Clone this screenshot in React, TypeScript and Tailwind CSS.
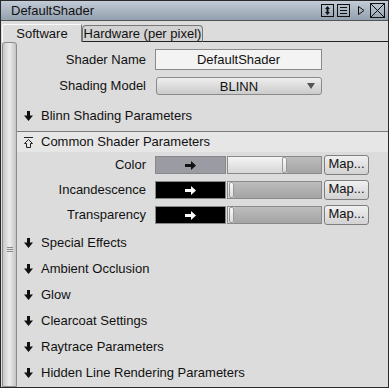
import { ReactNode } from 'react'

const font = { fontFamily: '"Liberation Sans", Arial, sans-serif' }

function DownArrow() {
  return (
    <svg width="9" height="10" viewBox="0 0 9 10" className="shrink-0">
      <path d="M3 0h3v4.5h3L4.5 10 0 4.5h3z" fill="#111" />
    </svg>
  )
}

function CollapseIcon() {
  return (
    <svg width="9" height="11" viewBox="0 0 9 11" className="shrink-0">
      <path d="M0 0.5h9" stroke="#222" />
      <path d="M4.5 2.5L8.5 6.5H6.5v4H2.5v-4H0.5z" fill="none" stroke="#222" />
    </svg>
  )
}

function RightArrow({ color }: { color: string }) {
  return (
    <svg width="11" height="9" viewBox="0 0 11 9">
      <path d="M0 3h6V0l5 4.5L6 9V6H0z" fill={color} />
    </svg>
  )
}

function TitleIcons() {
  return (
    <div className="flex items-center pr-[3px]">
      <svg width="13" height="13" viewBox="0 0 13 13">
        <rect x="0.5" y="0.5" width="12" height="12" fill="none" stroke="#111" />
        <path d="M6.5 2L9 5H7.5v3H9l-2.5 3L4 8h1.5V5H4z" fill="#111" />
      </svg>
      <svg width="13" height="13" viewBox="0 0 13 13" className="ml-[3px]">
        <rect x="0.5" y="0.5" width="12" height="12" fill="none" stroke="#111" />
        <path d="M3 3.5h7M3 6.5h7M3 9.5h7" stroke="#111" />
      </svg>
      <svg width="8" height="11" viewBox="0 0 8 11" className="ml-[7px]">
        <path d="M1.5 1.5L7 5.5 1.5 9.5z" fill="none" stroke="#111" />
      </svg>
      <svg width="15" height="15" viewBox="0 0 15 15" className="ml-[5px]">
        <rect x="0.5" y="0.5" width="14" height="14" fill="none" stroke="#111" />
        <path d="M1 1l13 13M14 1L1 14" stroke="#111" />
      </svg>
    </div>
  )
}

function Section({ title }: { title: string }) {
  return (
    <div className="h-[26px] flex items-center gap-[8px] pl-[7px]">
      <DownArrow />
      <span>{title}</span>
    </div>
  )
}

function Label({ children }: { children: ReactNode }) {
  return <div className="w-[129px] text-right shrink-0">{children}</div>
}

function ColorRow({
  label,
  swatch,
  arrow,
  handle,
}: {
  label: string
  swatch: string
  arrow: string
  handle: number
}) {
  return (
    <div className="h-[20px] flex items-center">
      <Label>{label}</Label>
      <div
        className="ml-[9px] w-[71px] h-[18px] flex items-center justify-center border border-[#888]"
        style={{ background: swatch }}
      >
        <RightArrow color={arrow} />
      </div>
      <div className="ml-[1px] w-[95px] h-[18px] flex border border-[#8a8a8a] overflow-hidden">
        <div
          className="h-full bg-gradient-to-b from-[#f4f4f4] to-[#d6d6d6]"
          style={{ width: handle }}
        />
        <div className="w-[5px] h-full rounded-[2px] border border-[#999] bg-gradient-to-b from-[#fafafa] to-[#dcdcdc] shrink-0" />
        <div className="flex-1 h-full bg-gradient-to-b from-[#bdbdbd] to-[#a4a4a4]" />
      </div>
      <button className="ml-[2px] w-[45px] h-[20px] rounded-[3px] border border-[#7f7f7f] bg-gradient-to-b from-[#f0f0f0] to-[#d2d2d2] text-[13px] leading-[15px] pb-[4px] text-[#111]">
        Map...
      </button>
    </div>
  )
}

export default function App() {
  return (
    <div
      className="w-[389px] h-[388px] flex flex-col bg-[#dcdcdc] border border-[#2a2a2a] text-[13px] text-[#111] overflow-hidden"
      style={font}
    >
      <div className="h-[20px] shrink-0 flex items-center justify-between pl-[10px] bg-gradient-to-b from-[#c3ccd7] to-[#93a0ae] border-b border-[#555]">
        <span className="text-[13px]">DefaultShader</span>
        <TitleIcons />
      </div>

      <div className="h-[21px] shrink-0 flex items-end pl-[1px]">
        <div className="h-[18px] w-[80px] flex items-center justify-center border-t border-l border-[#fafafa] border-r-[#777] border-r bg-[#dcdcdc] rounded-tl-[2px]">
          Software
        </div>
        <div className="h-[17px] w-[121px] flex items-center justify-center rounded-t-[4px] border border-[#777] border-b-[#222] bg-[#d2d2d2]">
          Hardware (per pixel)
        </div>
        <div className="flex-1 border-b border-[#222]" />
      </div>

      <div className="flex-1 flex min-h-0">
        <div className="w-[16px] shrink-0 flex pl-[1px]">
          <div className="flex-1 border border-[#8c8c8c] rounded-t-[3px] bg-gradient-to-r from-[#c8c8c8] via-[#ececec] to-[#c4c4c4] flex items-center justify-center pt-[70px]">
            <svg width="6" height="6" viewBox="0 0 6 6">
              <path d="M0 0.5h6M0 2.5h6M0 4.5h6" stroke="#888" />
            </svg>
          </div>
        </div>

        <div className="flex-1 flex flex-col">
          <div className="pt-[7px] flex flex-col gap-[7px]">
            <div className="h-[21px] flex items-center">
              <Label>Shader Name</Label>
              <div className="ml-[9px] w-[167px] h-[21px] flex items-center justify-center bg-[#f3f3f3] border border-[#8a8a8a]">
                DefaultShader
              </div>
            </div>
            <div className="h-[18px] flex items-center">
              <Label>Shading Model</Label>
              <div className="ml-[10px] w-[166px] h-[18px] relative flex items-center justify-center rounded-[3px] border border-[#8a8a8a] bg-gradient-to-b from-[#eeeeee] to-[#cbcbcb] pt-[2px]">
                BLINN
                <svg width="8" height="6" viewBox="0 0 8 6" className="absolute right-[6px] top-[5px]">
                  <path d="M0 0h8L4 6z" fill="#555" />
                </svg>
              </div>
            </div>
          </div>

          <div className="mt-[8px]">
            <Section title="Blinn Shading Parameters" />
          </div>

          <div className="mt-[2px] h-[21px] flex items-center gap-[8px] pl-[7px] border-t border-[#7a7a7a] bg-[#e6e6e6]">
            <CollapseIcon />
            <span>Common Shader Parameters</span>
          </div>

          <div className="pt-[3px] flex flex-col gap-[5px]">
            <ColorRow label="Color" swatch="#9b9ba3" arrow="#111" handle={54} />
            <ColorRow label="Incandescence" swatch="#000" arrow="#fff" handle={1} />
            <ColorRow label="Transparency" swatch="#000" arrow="#fff" handle={1} />
          </div>

          <div className="mt-[5px] flex flex-col">
            <Section title="Special Effects" />
            <Section title="Ambient Occlusion" />
            <Section title="Glow" />
            <Section title="Clearcoat Settings" />
            <Section title="Raytrace Parameters" />
            <Section title="Hidden Line Rendering Parameters" />
          </div>
        </div>
      </div>
    </div>
  )
}
